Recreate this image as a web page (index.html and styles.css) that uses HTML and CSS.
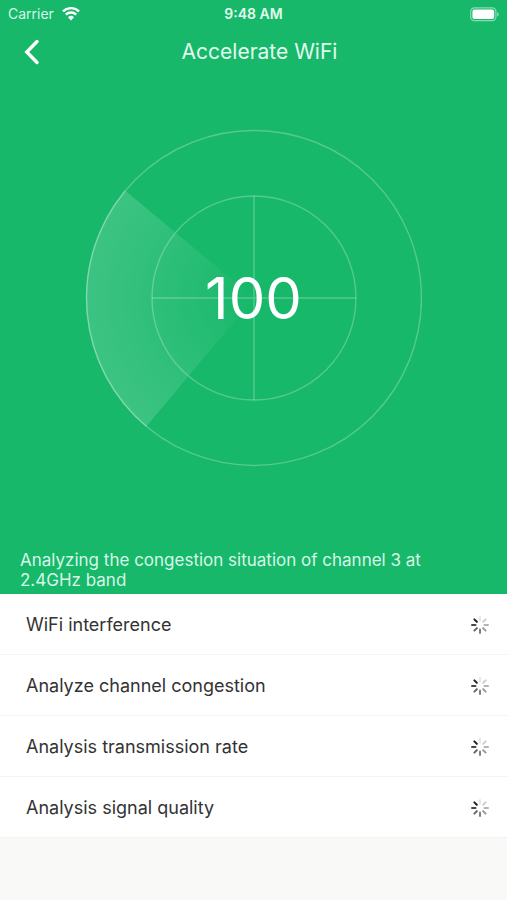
FILE: index.html
```
<!DOCTYPE html>
<html lang="en">
<head>
<meta charset="utf-8">
<meta name="viewport" content="width=device-width, initial-scale=1">
<title>Accelerate WiFi</title>
<link rel="stylesheet" href="styles.css">
</head>
<body>
<svg class="defs" aria-hidden="true">
  <symbol id="spinner" viewBox="-10 -10 20 20">
    <g stroke-width="2" stroke-linecap="round">
      <path d="M0-4.5V-8" stroke="#e6e6e6"/>
      <path d="M0-4.5V-8" stroke="#cfcfcf" transform="rotate(45)"/>
      <path d="M0-4.5V-8" stroke="#b4b4b4" transform="rotate(90)"/>
      <path d="M0-4.5V-8" stroke="#9c9c9c" transform="rotate(135)"/>
      <path d="M0-4.5V-8" stroke="#808080" transform="rotate(180)"/>
      <path d="M0-4.5V-8" stroke="#686868" transform="rotate(225)"/>
      <path d="M0-4.5V-8" stroke="#484848" transform="rotate(270)"/>
      <path d="M0-4.5V-8" stroke="#222222" transform="rotate(315)"/>
    </g>
  </symbol>
</svg>
<header class="hero">
  <div class="status">
    <div class="carrier">
      <span>Carrier</span>
      <svg class="wifi" width="18" height="14" viewBox="0 0 18 14" aria-hidden="true">
        <path d="M1 4.400a11.500 11.500 0 0 1 16 0M3.800 7.600a7.500 7.500 0 0 1 10.400 0" fill="none" stroke="#fff" stroke-width="2.4"/>
        <path d="M9 13.400 6 10.200a4.300 4.300 0 0 1 6 0Z" fill="#fff"/>
      </svg>
    </div>
    <span class="time">9:48 AM</span>
    <svg class="battery" width="29" height="15" viewBox="0 0 29 15" aria-hidden="true">
      <rect x=".7" y=".9" width="25.2" height="12.8" rx="3.6" fill="none" stroke="#8adbb2" stroke-width="1.2"/>
      <rect x="2.4" y="2.6" width="21.8" height="9.4" rx="2" fill="#fff"/>
      <path d="M27.2 5v4.6q1.6-.7 1.6-2.3T27.2 5Z" fill="#8adbb2"/>
    </svg>
  </div>
  <nav class="nav">
    <button class="back" type="button" aria-label="Back">
      <svg width="16" height="26" viewBox="0 0 16 26" aria-hidden="true">
        <path d="M13 2.5 2.8 13 13 23.5" fill="none" stroke="#fff" stroke-width="3.4" stroke-linecap="round" stroke-linejoin="miter"/>
      </svg>
    </button>
    <h1>Accelerate WiFi</h1>
  </nav>
  <div class="radar">
    <svg viewBox="-169 -169 338 338" aria-hidden="true">
      <defs>
        <radialGradient id="sweep" gradientUnits="userSpaceOnUse" cx="0" cy="0" r="168">
          <stop offset="0" stop-color="#fff" stop-opacity="0"/>
          <stop offset=".15" stop-color="#fff" stop-opacity=".02"/>
          <stop offset=".55" stop-color="#fff" stop-opacity=".09"/>
          <stop offset="1" stop-color="#fff" stop-opacity=".16"/>
        </radialGradient>
      </defs>
      <path d="M0 0-129-107.600A168 168 0 0 0-108 128.700Z" fill="url(#sweep)"/>
      <g fill="none" stroke="#fff" stroke-opacity=".25" stroke-width="1.4">
        <circle r="167.500"/>
        <circle r="102"/>
        <path d="M-102 0H102M0-102V102"/>
        <path stroke-opacity=".15" d="M-128.700-107.200A167.500 167.500 0 0 0-107.700 128.300"/>
      </g>
    </svg>
    <span class="score">100</span>
  </div>
  <p class="message">Analyzing the congestion situation of channel 3 at 2.4GHz band</p>
</header>
<main>
  <ul class="checks">
    <li><span>WiFi interference</span><svg class="spinner" role="img" aria-label="Loading"><use href="#spinner"/></svg></li>
    <li><span>Analyze channel congestion</span><svg class="spinner" role="img" aria-label="Loading"><use href="#spinner"/></svg></li>
    <li><span>Analysis transmission rate</span><svg class="spinner" role="img" aria-label="Loading"><use href="#spinner"/></svg></li>
    <li><span>Analysis signal quality</span><svg class="spinner" role="img" aria-label="Loading"><use href="#spinner"/></svg></li>
  </ul>
</main>
</body>
</html>
```
FILE: styles.css
```
* {
  box-sizing: border-box;
}

body {
  margin: 0;
  min-height: 100vh;
  background: #f9f9f7;
  color: #333;
  font-family: Inter, "Liberation Sans", sans-serif;
}

.defs {
  display: none;
}

svg {
  display: block;
}

.hero {
  background: #18b86b;
  color: #fff;
}

.status {
  display: grid;
  grid-template-columns: 1fr auto 1fr;
  align-items: center;
  height: 28px;
  padding: 0 8px;
  font-size: 14px;
  line-height: 28px;
}

.carrier {
  display: flex;
  align-items: center;
  gap: 8px;
  color: #d6f7e6;
}

.time {
  font-weight: 600;
  color: #e2faed;
}

.battery {
  justify-self: end;
}

.nav {
  display: grid;
  grid-template-columns: 48px 1fr 36px;
  align-items: center;
  height: 48px;
}

.back {
  justify-self: end;
  padding: 0 8px;
  border: 0;
  background: none;
}

h1 {
  margin: 0;
  font-size: 21px;
  font-weight: 400;
  line-height: 28px;
  text-align: center;
  color: #e2faed;
}

.radar {
  display: grid;
  place-items: center;
  width: 66.66%;
  margin: 53px auto 83px;
}

.radar > * {
  grid-area: 1 / 1;
}

.radar svg {
  width: 100%;
}

.score {
  font-size: 58px;
  line-height: 64px;
}

.message {
  margin: 0;
  padding: 0 80px 4px 20px;
  font-size: 17px;
  line-height: 20px;
  color: #d6f7e6;
}

.checks {
  margin: 0;
  padding: 0;
  list-style: none;
  background: #fff;
}

.checks li {
  display: flex;
  align-items: center;
  justify-content: space-between;
  height: 61px;
  padding: 2px 17px 0 26px;
  border-bottom: 1px solid #f3f3f3;
  font-size: 18px;
  line-height: 24px;
}

.spinner {
  width: 20px;
  height: 20px;
}
```
